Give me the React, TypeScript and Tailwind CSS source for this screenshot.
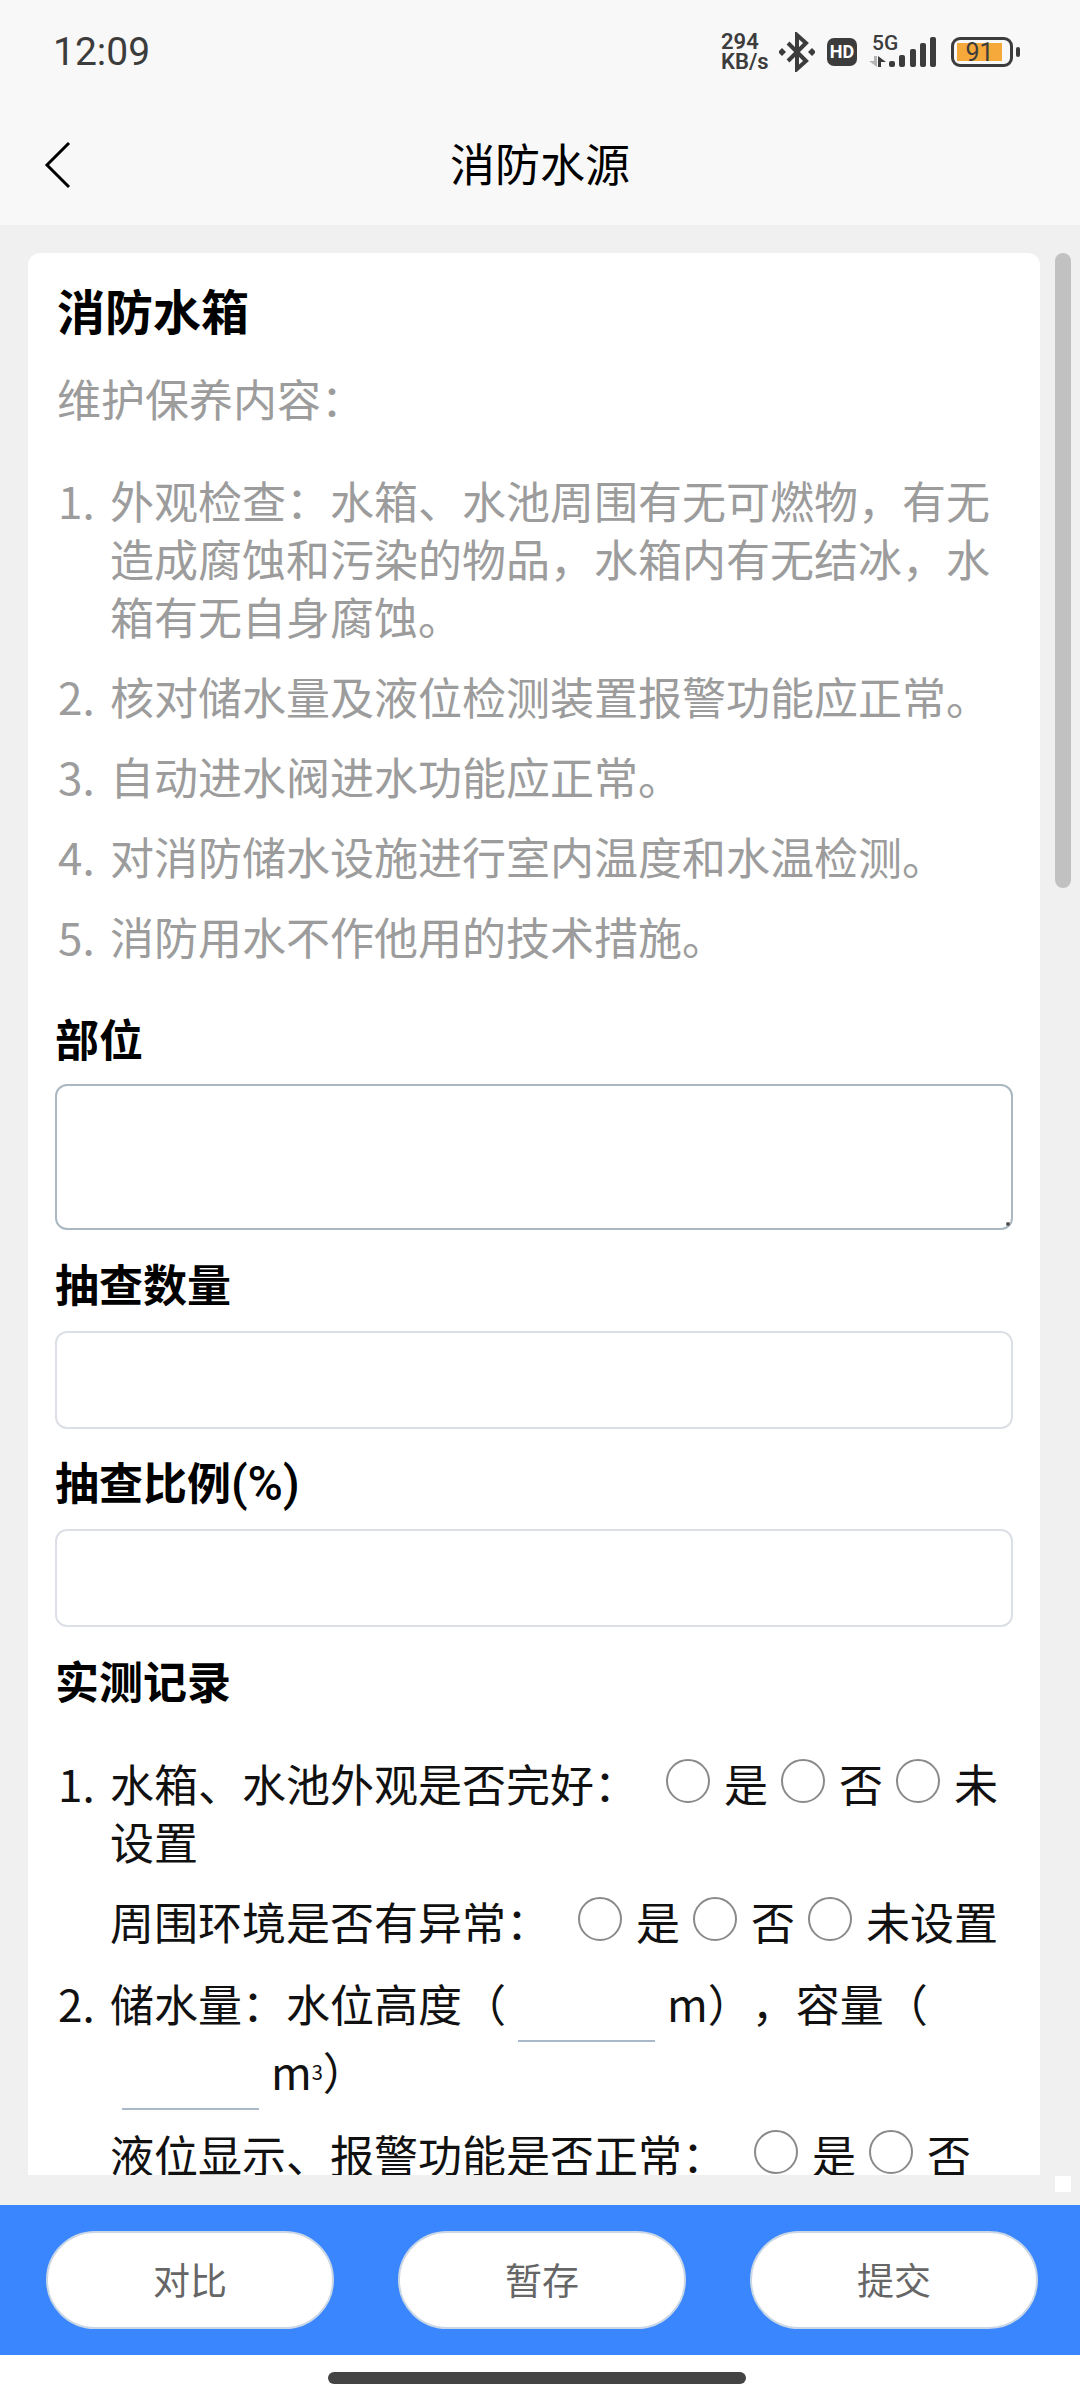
const maintenanceItems = [
  "外观检查：水箱、水池周围有无可燃物，有无造成腐蚀和污染的物品，水箱内有无结冰，水箱有无自身腐蚀。",
  "核对储水量及液位检测装置报警功能应正常。",
  "自动进水阀进水功能应正常。",
  "对消防储水设施进行室内温度和水温检测。",
  "消防用水不作他用的技术措施。",
]

function Radio({ label }: { label: string }) {
  return (
    <>
      <input
        type="radio"
        className="appearance-none inline-block w-[44px] h-[44px] rounded-full border-2 border-[#8a8a8a] bg-white ml-[13px] mr-[14px] align-[-1px]"
      />
      {label}
    </>
  )
}

function BlankInput() {
  return <span className="inline-block w-[137px] h-[40px] mx-[12px] border-b-2 border-[#a9b9c9] align-[-20px]" />
}

function Marker({ n }: { n: number }) {
  return <span className="inline-block w-[52px] -ml-[52px]">{n}.</span>
}

function StatusBar() {
  return (
    <div className="h-[104px] flex items-center justify-between pl-[53px] pr-[60px]">
      <span className="font-['Roboto',sans-serif] text-[39px] text-[#3c3c3c] leading-none">12:09</span>
      <div className="flex items-center text-[#3c3c3c]">
        <div className="w-[50px] flex flex-col font-['Roboto',sans-serif] font-semibold text-[22px] leading-[20px]">
          <span>294</span>
          <span>KB/s</span>
        </div>
        {/* bluetooth */}
        <svg width="36" height="40" viewBox="0 0 36 40" className="ml-[8px]">
          <path d="M9 11 L27 29 L18 37 L18 3 L27 11 L9 29" fill="none" stroke="#3c3c3c" strokeWidth="4" />
          <path d="M3 16 L7 20 L3 24 L-1 20Z M33 16 L37 20 L33 24 L29 20Z" fill="#3c3c3c" />
        </svg>
        <div className="ml-[12px] w-[30px] h-[28px] rounded-[7px] bg-[#3c3c3c] text-white flex items-center justify-center font-['Roboto',sans-serif] font-bold text-[18px] leading-none">
          HD
        </div>
        {/* 5G + signal bars */}
        <svg width="68" height="32" viewBox="0 0 68 32" className="ml-[12px] overflow-visible">
          <text x="3" y="14" fontFamily="Roboto, sans-serif" fontWeight="500" fontSize="21" fill="#3c3c3c">5G</text>
          <path d="M5 20 h3 v11 L0 25 h5z" fill="#b5b5b5" />
          <path d="M9 31 v-11 L17 26 h-5 v5z" fill="#3c3c3c" />
          <rect x="20" y="25" width="6" height="6" rx="2" fill="#3c3c3c" />
          <rect x="30" y="19" width="6" height="12" rx="2" fill="#3c3c3c" />
          <rect x="41" y="13" width="6" height="18" rx="2" fill="#3c3c3c" />
          <rect x="51" y="7" width="6" height="24" rx="2" fill="#3c3c3c" />
          <rect x="61" y="1" width="6" height="30" rx="2" fill="#3c3c3c" />
        </svg>
        <div className="ml-[14px] flex items-center">
          <div className="w-[62px] h-[30px] border-[3px] border-[#3c3c3c] rounded-[9px] p-[3px]">
            <div className="w-[45px] h-full bg-[#f5a93a] flex items-center justify-center font-['Roboto',sans-serif] text-[25px] leading-none text-[#3c3c3c]">
              91
            </div>
          </div>
          <div className="ml-[3px] w-[4px] h-[10px] rounded-[2px] bg-[#3c3c3c]" />
        </div>
      </div>
    </div>
  )
}

function Label({ children, className }: { children: React.ReactNode; className: string }) {
  return <div className={`font-bold leading-[58px] text-black ${className}`}>{children}</div>
}

export default function App() {
  return (
    <div className="w-[1080px] h-[2400px] flex flex-col bg-white font-['Noto_Sans_CJK_SC',sans-serif] text-[44px] [text-spacing-trim:space-all] overflow-hidden" lang="zh-CN">
      {/* header */}
      <div className="bg-[#f8f8f8] h-[225px]">
        <StatusBar />
        <div className="h-[121px] grid grid-cols-[1fr_auto_1fr] items-center">
          <svg width="30" height="48" viewBox="0 0 30 48" className="ml-[43px]">
            <path d="M26 2 L4 24 L26 46" fill="none" stroke="#000" strokeWidth="3" />
          </svg>
          <span className="text-[45px] leading-none text-black pb-[5px]">消防水源</span>
        </div>
      </div>

      {/* scroll area */}
      <div className="flex-1 min-h-0 bg-[#f0f0f0] pt-[28px] flex">
        <div className="ml-[28px] w-[1012px] h-[1922px] overflow-hidden bg-white rounded-t-[12px] px-[27px] pt-[26px]">
          <div className="text-[48px] leading-[60px] font-bold text-black ml-[2px]">消防水箱</div>
          <div className="mt-[30px] leading-[58px] text-[#9c9c9c] ml-[2px]">维护保养内容：</div>

          <ol className="mt-[44px] pl-[55px] text-[#9c9c9c]">
            {maintenanceItems.map((item, i) => (
              <li key={item} className="leading-[58px] mb-[22px]">
                <Marker n={i + 1} />
                {item}
              </li>
            ))}
          </ol>

          <Label className="mt-[44px]">部位</Label>
          <div className="relative mt-[17px] h-[146px] rounded-[12px] border-2 border-[#aab8c2] bg-white">
            <span className="absolute right-[1px] bottom-[2px] w-[4px] h-[4px] rounded-full bg-[#555555]" />
          </div>

          <Label className="mt-[24px]">抽查数量</Label>
          <input className="mt-[19px] block w-full h-[98px] rounded-[12px] border-2 border-[#dcdfe6] bg-white" />

          <Label className="mt-[23px]">
            抽查比例<span className="font-['Roboto',sans-serif] font-medium text-[48px]">(%)</span>
          </Label>
          <input className="mt-[16px] block w-full h-[98px] rounded-[12px] border-2 border-[#dcdfe6] bg-white" />

          <Label className="mt-[24px]">实测记录</Label>

          <ol className="mt-[45px] pl-[55px] text-[#111111]">
            <li className="leading-[58px] mb-[24px]">
              <p>
                <Marker n={1} />
                水箱、水池外观是否完好：
                <span className="ml-[15px]" />
                <Radio label="是" />
                <Radio label="否" />
                <Radio label="未设置" />
              </p>
              <p className="mt-[22px]">
                周围环境是否有异常：
                <span className="ml-[15px]" />
                <Radio label="是" />
                <Radio label="否" />
                <Radio label="未设置" />
              </p>
            </li>
            <li className="leading-[58px]">
              <p>
                <Marker n={2} />
                储水量：水位高度（
                <BlankInput />
                m），容量（
                <BlankInput />
                m<sup className="text-[20px]">3</sup>）
              </p>
              <p className="mt-[15px]">
                液位显示、报警功能是否正常：
                <span className="ml-[15px]" />
                <Radio label="是" />
                <Radio label="否" />
              </p>
            </li>
          </ol>
        </div>

        {/* scrollbar */}
        <div className="ml-[15px] w-[16px] h-[1939px] flex flex-col justify-between">
          <div className="h-[635px] rounded-[8px] bg-[#c1c1c1]" />
          <div className="h-[16px] bg-white" />
        </div>
      </div>

      {/* action bar */}
      <div className="h-[150px] bg-[#3a86ff] flex items-center justify-between pl-[46px] pr-[42px]">
        {["对比", "暂存", "提交"].map((label) => (
          <button
            key={label}
            className="w-[288px] h-[98px] rounded-full bg-white border-2 border-[#c9d6e6] text-[37px] text-[#666666]"
          >
            {label}
          </button>
        ))}
      </div>

      {/* home indicator */}
      <div className="h-[45px] bg-white flex items-start justify-center pt-[17px] pr-[6px]">
        <div className="w-[418px] h-[12px] rounded-full bg-[#444444]" />
      </div>
    </div>
  )
}
